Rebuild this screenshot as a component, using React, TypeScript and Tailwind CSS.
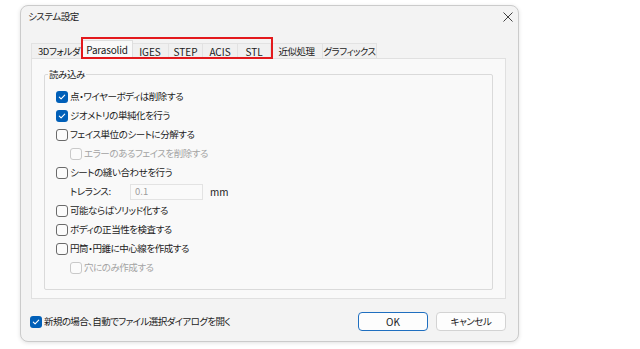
import React from "react";

function Box({ checked = false, disabled = false }: { checked?: boolean; disabled?: boolean }) {
  if (checked) {
    return (
      <span className="flex h-[12px] w-[12px] shrink-0 items-center justify-center rounded-[3px] bg-[#005fb8]">
        <svg width="8" height="8" viewBox="0 0 8 8">
          <path d="M1.3 4.1 L3.1 5.9 L6.7 2.2" stroke="#ffffff" strokeWidth="1.1" fill="none" strokeLinecap="round" strokeLinejoin="round" />
        </svg>
      </span>
    );
  }
  return (
    <span
      className={
        disabled
          ? "h-[12px] w-[12px] shrink-0 rounded-[3px] border border-[#c9c9c9] bg-[#fbfbfb]"
          : "h-[12px] w-[12px] shrink-0 rounded-[3px] border border-[#6a6a6a] bg-[#fbfbfb]"
      }
    />
  );
}

function Row({
  label,
  checked = false,
  disabled = false,
  indent = false,
}: {
  label: string;
  checked?: boolean;
  disabled?: boolean;
  indent?: boolean;
}) {
  return (
    <div className={indent ? "flex h-[19px] items-center gap-[2px] pl-[14px]" : "flex h-[19px] items-center gap-[2px]"}>
      <Box checked={checked} disabled={disabled} />
      <span className={disabled ? "text-[#a3a3a3]" : "text-[#1b1b1b]"}>{label}</span>
    </div>
  );
}

function Tab({ label, w }: { label: string; w: string }) {
  return (
    <div className={`flex h-[15px] items-center justify-center whitespace-nowrap border-l border-t border-[#e2e2e2] bg-[#f0f0f0] pt-[1px] ${w}`}>
      {label}
    </div>
  );
}

export default function App() {
  return (
    <div className="h-[349px] w-[640px] overflow-hidden bg-white pt-[5px] text-[9.5px] leading-none tracking-[-0.45px] text-[#1b1b1b] font-['Noto_Sans_CJK_JP','Noto_Sans_CJK_SC',sans-serif] [font-feature-settings:'palt']">
      <div className="ml-[20px] flex h-[337px] w-[499px] flex-col rounded-[8px] border border-[#cbcbcb] bg-[#f3f3f3] shadow-[0_1px_4px_rgba(0,0,0,0.12)]">
        {/* title bar */}
        <div className="flex h-[22px] shrink-0 items-center justify-between pl-[7px] pr-[5px]">
          <span className="text-[9.5px]">システム設定</span>
          <svg width="10" height="10" viewBox="0 0 10 10">
            <path d="M0.5 0.5 L9.5 9.5 M9.5 0.5 L0.5 9.5" stroke="#2b2b2b" strokeWidth="0.9" />
          </svg>
        </div>

        {/* tabs */}
        <div className="relative ml-[10px] mt-[15px] flex h-[15px] shrink-0 items-end">
          <div className="flex h-[15px] w-[52px] items-center overflow-hidden whitespace-nowrap border-l border-t border-[#e2e2e2] bg-[#f0f0f0] pl-[6px] pt-[1px]">
            3Dフォルダ
          </div>
          <div className="relative z-10 -mx-[2px] -mb-[1px] flex h-[19px] w-[52px] items-center justify-center border-x border-t border-[#dedede] bg-[#f9f9f9] pb-[1px] text-[10px] tracking-[-0.2px]">
            Parasolid
          </div>
          <Tab label="IGES" w="w-[37px] text-[10px] tracking-normal" />
          <Tab label="STEP" w="w-[34px] text-[10px] tracking-normal" />
          <Tab label="ACIS" w="w-[35px] text-[10px] tracking-normal" />
          <Tab label="STL" w="w-[33px] text-[10px] tracking-normal" />
          <Tab label="近似処理" w="w-[52px]" />
          <div className="flex h-[15px] w-[55px] items-center justify-center whitespace-nowrap border-x border-t border-[#e2e2e2] bg-[#f0f0f0] pt-[1px] tracking-[-0.6px]">
            グラフィックス
          </div>
          <div className="pointer-events-none absolute left-[50px] top-[-6px] z-20 h-[22px] w-[192px] border-2 border-[#e3191c]" />
        </div>

        {/* panel */}
        <div className="ml-[10px] flex h-[241px] w-[475px] shrink-0 flex-col border border-[#e0e0e0] bg-[#f9f9f9]">
          <fieldset className="mx-[12px] mt-[8px] h-[223px] rounded-[2px] border border-[#dadada] px-[3px]">
            <legend className="h-[14px] px-[1px] leading-[14px]">読み込み</legend>
            <div className="flex flex-col pl-[8px] pt-[6px]">
              <Row label="点・ワイヤーボディは削除する" checked />
              <Row label="ジオメトリの単純化を行う" checked />
              <Row label="フェイス単位のシートに分解する" />
              <Row label="エラーのあるフェイスを削除する" disabled indent />
              <Row label="シートの縫い合わせを行う" />
              <div className="flex h-[19px] items-center pl-[14px]">
                <span className="w-[60px]">トレランス:</span>
                <div className="flex h-[16px] w-[73px] items-center border border-[#e3e3e3] bg-[#fafafa] pl-[4px] text-[#9c9c9c] tracking-normal">
                  0.1
                </div>
                <span className="ml-[7px] text-[10px] tracking-normal">mm</span>
              </div>
              <Row label="可能ならばソリッド化する" />
              <Row label="ボディの正当性を検査する" />
              <Row label="円筒・円錐に中心線を作成する" />
              <Row label="穴にのみ作成する" disabled indent />
            </div>
          </fieldset>
        </div>

        {/* bottom */}
        <div className="flex flex-1 items-center justify-between pl-[9px] pr-[12px] pt-[3px]">
          <div className="flex items-center gap-[2px]">
            <Box checked />
            <span className="tracking-[-0.6px]">新規の場合、自動でファイル選択ダイアログを開く</span>
          </div>
          <div className="flex gap-[8px]">
            <div className="flex h-[19px] w-[70px] items-center justify-center rounded-[4px] border border-[#1f6fc0] bg-[#fdfdfd] text-[10px] tracking-normal">
              OK
            </div>
            <div className="flex h-[19px] w-[70px] items-center justify-center rounded-[4px] border border-[#d3d3d3] bg-[#fdfdfd]">
              キャンセル
            </div>
          </div>
        </div>
      </div>
    </div>
  );
}
